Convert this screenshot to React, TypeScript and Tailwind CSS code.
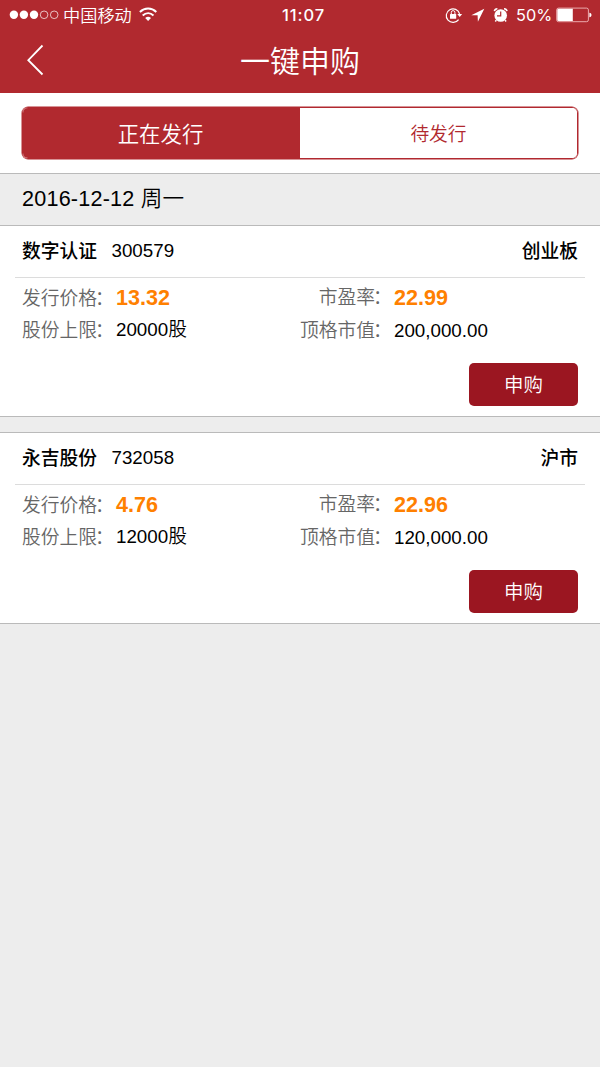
import React from "react";

const stocks = [
  { name: "数字认证", code: "300579", board: "创业板", price: "13.32", limit: "20000股", pe: "22.99", value: "200,000.00" },
  { name: "永吉股份", code: "732058", board: "沪市", price: "4.76", limit: "12000股", pe: "22.96", value: "120,000.00" },
];

function StatusBar() {
  return (
    <div className="flex h-[30px] items-center text-white">
      <svg className="ml-[9px] h-[30px] w-[50px] shrink-0" viewBox="9 0 50 30" fill="none" stroke="white">
        <circle cx="13.9" cy="14.8" r="4.2" fill="white" stroke="none" />
        <circle cx="23.9" cy="14.8" r="4.2" fill="white" stroke="none" />
        <circle cx="34" cy="14.8" r="4.2" fill="white" stroke="none" />
        <circle cx="44.1" cy="14.8" r="3.8" strokeWidth="0.7" />
        <circle cx="54.2" cy="14.8" r="3.8" strokeWidth="0.7" />
      </svg>
      <span className="ml-[4px] w-[70px] pt-[2px] text-[17.2px] leading-[30px] font-[350] whitespace-nowrap">中国移动</span>
      <svg className="ml-[6px] h-[30px] w-[19px] shrink-0" viewBox="139 0 19 30" fill="none" stroke="white" strokeWidth="2">
        <path d="M139.9 11.9C144.7 7.4 151.5 7.4 156.3 11.9" />
        <path d="M142.7 15.5C146 12.5 150.3 12.5 153.5 15.5" />
        <path d="M145.2 18C147.1 16.3 149.1 16.3 151 18L148.1 21Z" fill="white" stroke="none" />
      </svg>
      <span className="ml-[124px] w-[46px] pt-px font-[Inter] text-[16.5px] leading-[29px] font-medium tracking-[0.9px]">11:07</span>
      <svg className="ml-[117px] h-[30px] w-[67px] shrink-0" viewBox="445 0 67 30" fill="none">
        <path d="M458.6 19.6A6.8 6.8 0 1 1 459.6 13.8" stroke="white" strokeWidth="1.2" />
        <path d="M457.3 14.1H462.1L459.7 17Z" fill="white" />
        <rect x="450" y="13.9" width="6.2" height="4.8" rx="0.5" fill="white" />
        <path d="M451.3 14V12.4A1.8 1.8 0 0 1 454.9 12.4V14" stroke="white" strokeWidth="1" />
        <path d="M484.3 8.8L471.3 15.3H477.6L477.9 21.8Z" fill="white" />
        <circle cx="500.7" cy="15.5" r="6.3" fill="white" />
        <path d="M494.4 11.1A3 3 0 0 1 497.4 8.7M504 8.7A3 3 0 0 1 507 11.1" stroke="white" strokeWidth="1.6" />
        <path d="M496.3 20.1L495.3 21.5M505.1 20.1L506.1 21.5" stroke="white" strokeWidth="1.5" />
        <path d="M500.7 11.4V15.8H497" stroke="#b1292f" strokeWidth="1.2" />
      </svg>
      <span className="ml-[4px] w-[37px] pt-px font-[Inter] text-[16.3px] leading-[29px] whitespace-nowrap">50%</span>
      <svg className="ml-[3px] h-[30px] w-[37px] shrink-0" viewBox="556 0 37 30" fill="none">
        <rect x="556.7" y="8.1" width="31.7" height="13.6" rx="1.8" stroke="#f2b9bb" strokeWidth="0.9" />
        <path d="M558.5 8.8H572.8V21H558.5Q557.3 21 557.3 19.8V10Q557.3 8.8 558.5 8.8Z" fill="white" />
        <path d="M589.4 12.7C592.2 13.2 592.2 16.8 589.4 17.3Z" fill="white" />
      </svg>
    </div>
  );
}

function Field({ label, value, strong, up, drop }: { label: string; value: string; strong?: boolean; up?: boolean; drop?: boolean }) {
  return (
    <div className="flex h-8 items-center">
      <span className={"flex w-[94px] shrink-0 justify-end font-[350] leading-8 whitespace-nowrap text-[#666] " + (up ? "" : "pt-[2px]")}>
        {label}
        <span className="w-[19px] -indent-[2px]">：</span>
      </span>
      <span className={strong ? "text-[21.6px] leading-8 font-bold text-[#ff8000]" : "leading-8 font-[350] text-black " + (drop ? "pt-[2px]" : "")}>{value}</span>
    </div>
  );
}

function StockCard({ stock }: { stock: (typeof stocks)[number] }) {
  return (
    <section className="h-[192px] border-y border-[#bababa] bg-white text-[18.75px]">
      <div className="mx-[15px] flex h-[52px] items-center border-b border-[#dcdcdc] px-[7px] text-black">
        <span className="pt-[2px] font-medium">{stock.name}</span>
        <span className="ml-[14.5px]">{stock.code}</span>
        <span className="ml-auto pt-[2px] font-medium">{stock.board}</span>
      </div>
      <div className="grid grid-cols-[278px_1fr] pt-[4px] pl-[22px]">
        <Field label="发行价格" value={stock.price} strong />
        <Field label="市盈率" value={stock.pe} strong up />
        <Field label="股份上限" value={stock.limit} />
        <Field label="顶格市值" value={stock.value} drop />
      </div>
      <div className="flex justify-end pt-[17px] pr-[22px]">
        <button className="h-[43px] w-[109px] rounded-[5px] bg-[#9b1621] pt-[2px] text-[19.5px] font-[350] text-white">申购</button>
      </div>
    </section>
  );
}

export default function App() {
  return (
    <main className="h-[1067px] w-[600px] overflow-hidden bg-[#ededed] font-['Liberation_Sans','Noto_Sans_CJK_SC',sans-serif]">
      <header className="h-[93px] bg-[#b1292f]">
        <StatusBar />
        <div className="grid h-[63px] grid-cols-[60px_1fr_60px] items-center text-white">
          <svg className="mb-[3px] ml-[26px] h-[34px] w-[20px]" viewBox="26 43 20 34" fill="none" stroke="white" strokeWidth="1.8">
            <path d="M42.5 45.5L28.3 60.2L42.5 74.5" />
          </svg>
          <h1 className="text-center text-[30px] leading-[60px] font-[350]">一键申购</h1>
        </div>
      </header>
      <div className="h-20 bg-white px-[22px] pt-[14px]">
        <div className="flex h-[52px] overflow-hidden rounded-[6px] border border-[#b1292f] shadow-[0_0_0_0.5px_#b1292f]">
          <button className="w-[277px] bg-[#b1292f] pt-[4px] pr-[2px] text-[21.4px] font-[350] text-white">正在发行</button>
          <button className="flex-1 bg-white pt-[4px] text-[18.75px] font-[350] text-[#b1292f]">待发行</button>
        </div>
      </div>
      <div className="h-[52px] border-t border-[#bababa] pl-[22px] text-[21.6px] leading-[50px] tracking-[0.2px] text-black">
        2016-12-12 <span className="font-[350]">周一</span>
      </div>
      <div className="flex flex-col gap-[15px]">
        {stocks.map((s) => (
          <StockCard key={s.code} stock={s} />
        ))}
      </div>
    </main>
  );
}
